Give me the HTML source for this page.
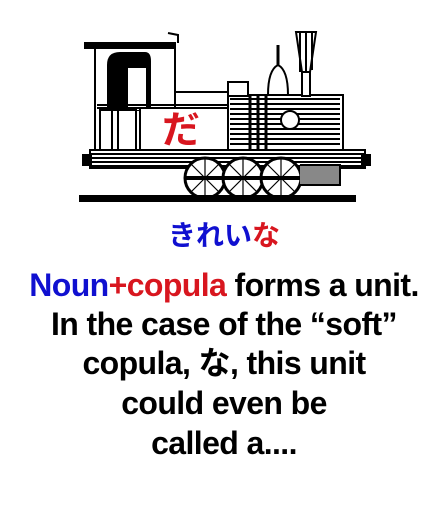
<!DOCTYPE html>
<html><head><meta charset="utf-8"><style>
html,body{margin:0;padding:0;background:#fff;width:448px;height:532px;overflow:hidden}
.t{position:absolute;left:0;width:448px;text-align:center;font-family:"Liberation Sans","Noto Sans CJK JP",sans-serif;font-weight:bold;white-space:nowrap;line-height:36px;height:36px}
.b{font-size:32px;letter-spacing:-0.6px}
</style></head><body>
<svg width="448" height="210" style="position:absolute;left:0;top:0" viewBox="0 0 448 210">
<g stroke="#000" fill="none" stroke-width="2">
<rect x="85" y="43" width="90" height="5" fill="#000"/>
<path d="M168 33 l10 2 l0 8" />
<rect x="95" y="48" width="80" height="110" fill="#fff"/>
<path d="M108 110 V65 q0-12 12-12 h25 q5 0 5 8 v49 z" fill="#000"/>
<rect x="128" y="68" width="18" height="42" fill="#fff" stroke="none"/>
<path d="M97 105 h140 M97 108 h140"/>
<rect x="100" y="110" width="12" height="46"/>
<rect x="118" y="110" width="18" height="46"/>
<rect x="140" y="108" width="88" height="48" fill="#fff"/>
<path d="M175 92 h60 v16"/>
<rect x="228" y="95" width="115" height="55" fill="#fff"/>
<g stroke-width="2"><path d="M230 99h110M230 104h110M230 109h110M230 114h110M230 119h110M230 124h110M230 129h110M230 134h110M230 139h110M230 144h110"/></g>
<path d="M250 95v55M258 95v55M266 95v55" stroke-width="3"/>
<circle cx="290" cy="120" r="9" fill="#fff"/>
<path d="M268 95 q0-25 10-30 q10 5 10 30 z" fill="#fff"/>
<path d="M278 65 v-20" stroke-width="3"/>
<rect x="228" y="82" width="20" height="14" fill="#fff"/>
<path d="M296 32 h20 l-6 40 h-8 z" fill="#fff"/>
<path d="M300 32 v40 M306 32 v40 M312 32 v38"/>
<rect x="302" y="72" width="8" height="24" fill="#fff"/>
<rect x="90" y="150" width="275" height="18" fill="#fff"/>
<path d="M90 154h275 M90 158h275 M90 162h275 M90 166h275"/>
<rect x="83" y="155" width="8" height="10" fill="#000"/>
<rect x="362" y="155" width="8" height="10" fill="#000"/>
<circle cx="205" cy="178" r="20" fill="#fff" stroke-width="3"/>
<circle cx="243" cy="178" r="20" fill="#fff" stroke-width="3"/>
<circle cx="281" cy="178" r="20" fill="#fff" stroke-width="3"/>
<path d="M185 178h116" stroke-width="4"/>
<path d="M205 158v40M243 158v40M281 158v40M191 164l28 28M219 164l-28 28M229 164l28 28M257 164l-28 28M267 164l28 28M295 164l-28 28" stroke-width="1.2"/>
<path d="M300 165 l40 0 l0 20 l-40 0" fill="#888"/>
<rect x="80" y="196" width="275" height="5" fill="#000"/>
</g>
<text x="181" y="143" font-family="Liberation Sans,Noto Sans CJK JP,sans-serif" font-size="38" font-weight="bold" fill="#d8161f" text-anchor="middle">だ</text>
</svg>
<div class="t" style="top:218px;font-size:28px;"><span style="color:#1010d0">きれい</span><span style="color:#d8161f">な</span></div>
<div class="t b" style="top:267px;"><span style="color:#1010d0">Noun</span><span style="color:#d8161f">+copula</span> forms a unit.</div>
<div class="t b" style="top:306px;">In the case of the “soft”</div>
<div class="t b" style="top:345px;">copula, な, this unit</div>
<div class="t b" style="top:385px;">could even be</div>
<div class="t b" style="top:425px;">called a....</div>
</body></html>
